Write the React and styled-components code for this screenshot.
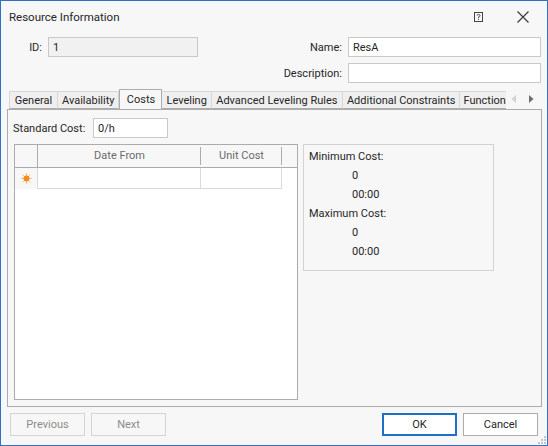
import React from 'react';
import styled, { createGlobalStyle } from 'styled-components';

const COLORS = {
  frame: '#2b73c9',
  bg: '#f7f7f7',
  text: '#262626',
  muted: '#8c8c8c',
  inputBorder: '#c9c9c9',
  panelBorder: '#acacac',
  lightLine: '#dadada',
  accent: '#1f6fc5',
};

const TABS = [
  { label: 'General', width: 49 },
  { label: 'Availability', width: 61 },
  { label: 'Costs', width: 43, active: true },
  { label: 'Leveling', width: 49 },
  { label: 'Advanced Leveling Rules', width: 131 },
  { label: 'Additional Constraints', width: 116 },
  { label: 'Function', width: 60 },
];

const GlobalStyle = createGlobalStyle`
  html, body {
    margin: 0;
    padding: 0;
    background: #ffffff;
  }
  body {
    font-family: Roboto, "Noto Sans", sans-serif;
    font-size: 11px;
    color: ${COLORS.text};
  }
  * {
    box-sizing: border-box;
  }
`;

const HelpIcon = () => (
  <svg width="9" height="10" viewBox="0 0 9 10">
    <rect x="0.5" y="0.5" width="8" height="9" fill="none" stroke="#444" />
    <path d="M3 3.5 Q3 2.5 4.5 2.5 Q6 2.5 6 3.7 Q6 4.6 4.5 5 L4.5 6" fill="none" stroke="#444" />
    <rect x="4" y="6.8" width="1" height="1" fill="#444" />
  </svg>
);

const CloseIcon = () => (
  <svg width="12" height="12" viewBox="0 0 12 12">
    <path d="M0.5 0.5 L11.5 11.5 M11.5 0.5 L0.5 11.5" stroke="#3a3a3a" strokeWidth="1.2" />
  </svg>
);

const Arrow = ({ dir, color }) => (
  <svg width="5" height="8" viewBox="0 0 5 8">
    {dir === 'left' ? (
      <path d="M5 0 L0.5 4 L5 8 Z" fill={color} />
    ) : (
      <path d="M0 0 L4.5 4 L0 8 Z" fill={color} />
    )}
  </svg>
);

const NewRowIcon = () => (
  <svg width="11" height="11" viewBox="0 0 11 11">
    <g stroke="#fbbf85" strokeWidth="1">
      <path d="M5.5 0 V11 M0 5.5 H11 M1.6 1.6 L9.4 9.4 M9.4 1.6 L1.6 9.4" />
    </g>
    <circle cx="5.5" cy="5.5" r="3" fill="#f58a1f" />
  </svg>
);

const Grip = () => (
  <svg width="10" height="10" viewBox="0 0 10 10">
    <g fill="#c4c4c4">
      <rect x="7" y="1" width="2" height="2" />
      <rect x="4" y="4" width="2" height="2" />
      <rect x="7" y="4" width="2" height="2" />
      <rect x="1" y="7" width="2" height="2" />
      <rect x="4" y="7" width="2" height="2" />
      <rect x="7" y="7" width="2" height="2" />
    </g>
  </svg>
);

const App = () => {
  return (
    <>
      <GlobalStyle />
      <Window>
        <TitleBar>
          <Title>Resource Information</Title>
          <TitleButtons>
            <HelpIcon />
            <CloseIcon />
          </TitleButtons>
        </TitleBar>

        <Fields>
          <Label>ID:</Label>
          <Input value="1" readOnly disabled />
          <Label>Name:</Label>
          <Input value="ResA" readOnly />
          <span />
          <span />
          <Label>Description:</Label>
          <Input value="" readOnly />
        </Fields>

        <TabStrip>
          <TabList>
            {TABS.map((tab) => (
              <Tab key={tab.label} $active={tab.active} $width={tab.width}>
                {tab.label}
              </Tab>
            ))}
          </TabList>
          <TabScroll>
            <Arrow dir="left" color="#d2d2d2" />
            <Arrow dir="right" color="#6e6e6e" />
          </TabScroll>
        </TabStrip>

        <Panel>
          <CostRow>
            <CostLabel>Standard Cost:</CostLabel>
            <CostInput value="0/h" readOnly />
          </CostRow>
          <Body>
            <Grid>
              <HeaderRow>
                <IndicatorHead />
                <HeadCell $width={163}>Date From</HeadCell>
                <HeadCell $width={81}>Unit Cost</HeadCell>
              </HeaderRow>
              <DataRow>
                <IndicatorCell>
                  <NewRowIcon />
                </IndicatorCell>
                <DataCell $width={163} />
                <DataCell $width={81} />
              </DataRow>
            </Grid>
            <Summary>
              <SummaryLabel>Minimum Cost:</SummaryLabel>
              <SummaryValue>0</SummaryValue>
              <SummaryValue>00:00</SummaryValue>
              <SummaryLabel>Maximum Cost:</SummaryLabel>
              <SummaryValue>0</SummaryValue>
              <SummaryValue>00:00</SummaryValue>
            </Summary>
          </Body>
        </Panel>

        <Footer>
          <ButtonGroup>
            <Button disabled>Previous</Button>
            <Button disabled>Next</Button>
          </ButtonGroup>
          <ButtonGroup>
            <Button $primary>OK</Button>
            <Button>Cancel</Button>
          </ButtonGroup>
        </Footer>

        <GripCorner>
          <Grip />
        </GripCorner>
      </Window>
    </>
  );
};

const Window = styled.div`
  position: relative;
  width: 548px;
  height: 446px;
  border: 1px solid ${COLORS.frame};
  background: ${COLORS.bg};
  display: flex;
  flex-direction: column;
`;

const TitleBar = styled.div`
  height: 30px;
  display: flex;
  align-items: center;
  justify-content: space-between;
  padding: 0 18px 0 8px;
`;

const Title = styled.div`
  font-size: 11.5px;
  padding-top: 1px;
`;

const TitleButtons = styled.div`
  display: flex;
  align-items: center;
  gap: 34px;
  padding-top: 2px;
`;

const Fields = styled.div`
  display: grid;
  grid-template-columns: 42px 150px 1fr 193px;
  grid-auto-rows: 20px;
  column-gap: 5px;
  row-gap: 6px;
  padding: 6px 6px 0 0;
`;

const Label = styled.label`
  display: flex;
  align-items: center;
  justify-content: flex-end;
  padding-right: 1px;
  white-space: nowrap;
`;

const Input = styled.input`
  height: 20px;
  width: 100%;
  border: 1px solid ${COLORS.inputBorder};
  background: ${(p) => (p.disabled ? '#f1f1f1' : '#ffffff')};
  font: inherit;
  color: ${COLORS.text};
  padding: 0 4px;
  outline: none;
`;

const TabStrip = styled.div`
  display: flex;
  align-items: flex-end;
  margin-top: 6px;
  padding-left: 8px;
  height: 20px;
  position: relative;
  z-index: 1;
`;

const TabList = styled.div`
  display: flex;
  align-items: flex-end;
  width: 497px;
  overflow: hidden;
  height: 20px;
`;

const Tab = styled.div`
  flex: none;
  min-width: ${(p) => p.$width}px;
  height: ${(p) => (p.$active ? 21 : 18)}px;
  margin-bottom: ${(p) => (p.$active ? -1 : 0)}px;
  display: flex;
  align-items: center;
  justify-content: center;
  padding: 0 4px ${(p) => (p.$active ? 2 : 0)}px;
  white-space: nowrap;
  border: 1px solid ${(p) => (p.$active ? COLORS.panelBorder : '#d7d7d7')};
  border-bottom: ${(p) => (p.$active ? 'none' : `1px solid ${COLORS.panelBorder}`)};
  border-left-width: ${(p) => (p.$active ? 1 : 0)}px;
  background: ${(p) => (p.$active ? COLORS.bg : '#efefef')};
  &:first-child {
    border-left-width: 1px;
  }
  &:last-child {
    justify-content: flex-start;
    padding-left: 3px;
  }
`;

const TabScroll = styled.div`
  display: flex;
  align-items: center;
  gap: 13px;
  height: 18px;
  padding-left: 5px;
  padding-bottom: 2px;
`;

const Panel = styled.div`
  flex: 1;
  margin: 0 5px 0 6px;
  border: 1px solid ${COLORS.panelBorder};
  padding: 8px 5px 6px;
  display: flex;
  flex-direction: column;
  gap: 6px;
  min-height: 0;
`;

const CostRow = styled.div`
  display: flex;
  align-items: center;
  gap: 7px;
  height: 20px;
`;

const CostLabel = styled.span`
  width: 73px;
  white-space: nowrap;
`;

const CostInput = styled(Input)`
  width: 75px;
`;

const Body = styled.div`
  flex: 1;
  display: flex;
  align-items: flex-start;
  gap: 5px;
  padding-left: 1px;
  min-height: 0;
`;

const Grid = styled.div`
  align-self: stretch;
  width: 284px;
  border: 1px solid ${COLORS.panelBorder};
  background: #ffffff;
`;

const HeaderRow = styled.div`
  display: flex;
  height: 23px;
  background: ${COLORS.bg};
  border-bottom: 1px solid ${COLORS.panelBorder};
`;

const IndicatorHead = styled.div`
  width: 23px;
  border-right: 1px solid ${COLORS.panelBorder};
`;

const HeadCell = styled.div`
  width: ${(p) => p.$width}px;
  display: flex;
  align-items: center;
  justify-content: center;
  color: #6b6b6b;
  position: relative;
  padding-bottom: 1px;
  &::after {
    content: '';
    position: absolute;
    right: 0;
    top: 2px;
    bottom: 2px;
    width: 1px;
    background: ${COLORS.panelBorder};
  }
`;

const DataRow = styled.div`
  display: flex;
  height: 21px;
`;

const IndicatorCell = styled.div`
  width: 23px;
  background: ${COLORS.bg};
  border-right: 1px solid ${COLORS.lightLine};
  display: flex;
  align-items: center;
  justify-content: center;
  padding-left: 1px;
`;

const DataCell = styled.div`
  width: ${(p) => p.$width}px;
  border-right: 1px solid ${COLORS.lightLine};
  border-bottom: 1px solid ${COLORS.lightLine};
`;

const Summary = styled.div`
  width: 191px;
  height: 127px;
  border: 1px solid #d3d3d3;
  padding: 2px 5px;
  display: flex;
  flex-direction: column;
`;

const SummaryLabel = styled.div`
  height: 19px;
  line-height: 19px;
`;

const SummaryValue = styled(SummaryLabel)`
  padding-left: 43px;
`;

const Footer = styled.div`
  display: flex;
  justify-content: space-between;
  padding: 6px 9px 9px;
`;

const ButtonGroup = styled.div`
  display: flex;
  gap: 6px;
`;

const Button = styled.button`
  width: 75px;
  height: 23px;
  font: inherit;
  color: ${(p) => (p.disabled ? COLORS.muted : COLORS.text)};
  background: ${(p) => (p.disabled ? COLORS.bg : '#ffffff')};
  border: ${(p) =>
    p.$primary
      ? `2px solid ${COLORS.accent}`
      : `1px solid ${p.disabled ? '#d4d4d4' : COLORS.panelBorder}`};
  padding: 0;
`;

const GripCorner = styled.div`
  position: absolute;
  right: 0;
  bottom: 0;
  line-height: 0;
`;

export default App;
